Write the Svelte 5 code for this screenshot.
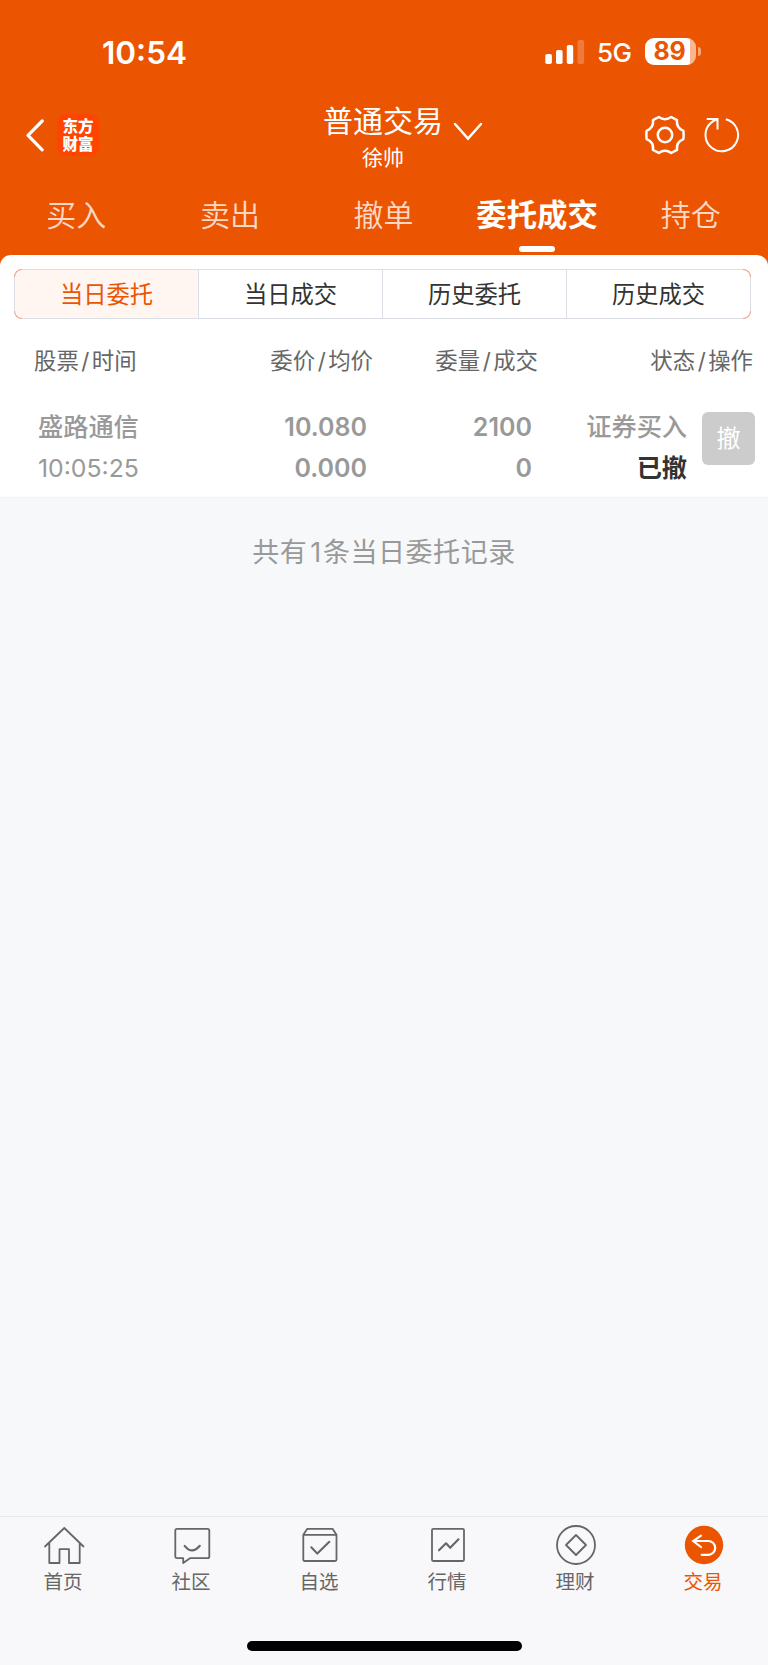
<script>
  const tabs = ['买入', '卖出', '撤单', '委托成交', '持仓'];
  const filters = ['当日委托', '当日成交', '历史委托', '历史成交'];
  const columns = [['股票', '时间'], ['委价', '均价'], ['委量', '成交'], ['状态', '操作']];
  const orders = [
    { name: '盛路通信', time: '10:05:25', price: '10.080', avg: '0.000', amount: 2100, filled: 0, type: '证券买入', status: '已撤' }
  ];
  const navItems = ['首页', '社区', '自选', '行情', '理财', '交易'];

  let activeTab = $state(3);
  let activeFilter = $state(0);
  let activeNav = $state(5);
</script>

<div class="app">
  <header>
    <div class="status-bar">
      <span class="clock">10:54</span>
      <svg class="signal" width="40" height="26" viewBox="0 0 40 26" fill="#fff">
        <rect x="0.3" y="15" width="6.6" height="10" rx="1.8" />
        <rect x="11" y="11" width="6.6" height="14" rx="1.8" />
        <rect x="21.8" y="6" width="6.4" height="19" rx="1.8" />
        <rect x="32.5" y="1" width="6.6" height="24" rx="1.8" opacity="0.22" />
      </svg>
      <span class="network">5G</span>
      <span class="battery"><b>89</b></span>
      <i class="nub"></i>
    </div>

    <div class="title-bar">
      <div class="side">
        <svg width="20" height="36" viewBox="0 0 20 36" fill="none" stroke="#fff" stroke-width="3.2" stroke-linecap="round" stroke-linejoin="round">
          <path d="M16.2 4 2 18.3 16.2 32.8" />
        </svg>
        <div class="logo"><span>东方</span><span>财富</span></div>
      </div>
      <div class="title">
        <h1>普通交易</h1>
        <p>徐帅</p>
        <svg class="caret" width="30" height="20" viewBox="0 0 30 20" fill="none" stroke="#fff" stroke-width="2.5" stroke-linecap="round">
          <path d="M2 2 15 16.6 28 2" />
        </svg>
      </div>
      <div class="side right">
        <svg width="42" height="42" viewBox="-21 -21 42 42" fill="none" stroke="#fff" stroke-width="2.5" stroke-linejoin="round">
          <path d="M-6.2-18Q0-13.6 6.2-18L12-14.8Q11-7.2 18.4-4.2Q18.9 0 18.4 4.2Q11 7.2 12 14.8L6.2 18Q0 13.6-6.2 18L-12 14.8Q-11 7.2-18.4 4.2Q-18.9 0-18.4-4.2Q-11-7.2-12-14.8Z" />
          <circle r="7.2" />
        </svg>
        <svg width="36" height="42" viewBox="-18 -21 36 42" fill="none" stroke="#fff" stroke-width="2">
          <path d="M3.8-15.8A16.3 16.3 0 1 1-11-12.2Q-8.5-14.4-4.8-16M-15.3-16H-4.5V-5.5" />
        </svg>
      </div>
    </div>

    <nav class="tabs">
      {#each tabs as tab, i}
        <button class:active={activeTab === i} onclick={() => (activeTab = i)}>{tab}</button>
      {/each}
    </nav>
  </header>

  <main>
    <div class="filters">
      {#each filters as filter, i}
        <button class:active={activeFilter === i} onclick={() => (activeFilter = i)}>{filter}</button>
      {/each}
    </div>

    <div class="row head">
      {#each columns as [first, second]}
        <span>{first}<i>/</i>{second}</span>
      {/each}
    </div>

    {#each orders as order}
      <div class="row order">
        <div class="cell"><b>{order.name}</b><span>{order.time}</span></div>
        <div class="cell num"><b>{order.price}</b><b>{order.avg}</b></div>
        <div class="cell num"><b>{order.amount}</b><b>{order.filled}</b></div>
        <div class="cell"><b>{order.type}</b><b class="status">{order.status}</b></div>
        <button class="cancel">撤</button>
      </div>
    {/each}
  </main>

  <p class="summary">共有<span>1</span>条当日委托记录</p>

  <footer>
    <nav class="bottom-nav">
      {#each navItems as item, i}
        <button class:active={activeNav === i} onclick={() => (activeNav = i)}>
          <svg width="42" height="42" viewBox="0 0 42 42" fill="none" stroke="currentColor" stroke-width="1.8" stroke-linejoin="round" stroke-linecap="round">
            {#if i === 0}
              <path d="M2 21.5 21.3 3 40.5 21.5M6.3 18V38H16.5V24.2H26V38H36.7V18" />
            {:else if i === 1}
              <path d="M6 3.8H36.5Q38.3 3.8 38.3 5.6V31.4Q38.3 33.2 36.5 33.2H19L12.2 38V33.2H6Q4.3 33.2 4.3 31.4V5.6Q4.3 3.8 6 3.8Z" />
              <path d="M13.7 20.8Q21 30 28.8 20.8" stroke-width="2.1" />
            {:else if i === 2}
              <path d="M4.3 9.8 8.3 3.8H33.5L37.5 9.8V34.5Q37.5 36 36 36H5.8Q4.3 36 4.3 34.5ZM4.3 9.8H37.5" />
              <path d="M12.3 22.3 18.3 28.6 30.3 16.8" stroke-width="2.1" />
            {:else if i === 3}
              <rect x="5" y="3.8" width="32" height="32.2" rx="1.2" />
              <path d="M12 25.3 19 18.3 23.2 22.8 31.5 14.3" stroke-width="2.1" />
            {:else if i === 4}
              <circle cx="21" cy="20" r="19" />
              <path d="M21 10 31 20 21 30 11 20Z" />
            {:else}
              <circle cx="21" cy="20" r="19.2" fill="currentColor" stroke="none" />
              <path d="M18 10.6 10.2 16 18 22M10.5 16H25.3A6.9 6.9 0 0 1 25.3 29.8H18.7" stroke="#fff" stroke-width="2.2" stroke-linejoin="miter" />
            {/if}
          </svg>
          <span>{item}</span>
        </button>
      {/each}
    </nav>
    <div class="home-indicator"></div>
  </footer>
</div>

<style>
  :global(body) {
    margin: 0;
  }

  .app {
    display: flex;
    flex-direction: column;
    width: 768px;
    height: 1665px;
    overflow: hidden;
    background: #f7f8fa;
    color: #999;
    font-family: Inter, "Noto Sans CJK SC", sans-serif;
  }

  button {
    border: none;
    background: none;
    padding: 0;
    font-family: inherit;
    color: inherit;
  }

  header {
    height: 269px;
    box-sizing: border-box;
    background: #eb5502;
    color: #fff;
  }

  .status-bar {
    display: flex;
    align-items: center;
    height: 103px;
    padding-left: 102px;
  }

  .clock {
    width: 443px;
    padding-top: 2px;
    font-size: 31.5px;
    line-height: 36px;
    font-weight: 600;
  }

  .network {
    width: 48px;
    margin-left: 12px;
    font-size: 26px;
    font-weight: 500;
    letter-spacing: -0.6px;
    line-height: 30px;
    padding-top: 3px;
  }

  .battery {
    width: 51px;
    height: 27px;
    border-radius: 9px;
    background: linear-gradient(90deg, #fff 45px, #f7b792 45px);
    color: #eb5502;
    font-size: 25px;
    line-height: 27px;
    text-align: center;
  }

  .battery b {
    font-weight: 700;
    letter-spacing: -0.3px;
    margin-right: 2px;
  }

  .nub {
    width: 3px;
    height: 9px;
    margin-left: 2px;
    border-radius: 0 4px 4px 0;
    background: #f5a67a;
  }

  .title-bar {
    display: grid;
    grid-template-columns: 1fr auto 1fr;
    height: 75px;
  }

  .side {
    display: flex;
    align-items: center;
    height: 64px;
    padding-left: 26px;
  }

  .right {
    justify-content: flex-end;
    gap: 18px;
    padding: 0 28px 0 0;
  }

  .logo {
    display: flex;
    flex-direction: column;
    width: 42px;
    height: 42px;
    margin-left: 11px;
    box-sizing: border-box;
    padding-top: 3px;
    border-radius: 9px;
    background: #ff4300;
    font-family: "Noto Sans CJK SC", sans-serif;
    font-size: 15.5px;
    line-height: 17.5px;
    font-weight: 900;
    text-align: center;
  }

  .title {
    position: relative;
    text-align: center;
  }

  h1 {
    margin: 0 1px 0 -1px;
    font-size: 30px;
    line-height: 36px;
    font-weight: 400;
  }

  .title p {
    margin: 0 1px 0 -1px;
    font-size: 21px;
    line-height: 38px;
  }

  .caret {
    position: absolute;
    left: 129px;
    top: 19px;
  }

  .tabs {
    display: grid;
    grid-template-columns: repeat(5, 1fr);
    height: 76px;
  }

  .tabs button {
    display: flex;
    flex-direction: column;
    align-items: center;
    padding: 15px 1px 0 0;
    color: #fcd9c7;
    font-size: 30px;
    line-height: 44px;
    font-weight: 350;
  }

  .tabs .active {
    color: #fff;
    font-size: 30.4px;
    font-weight: 700;
  }

  .tabs .active::after {
    content: "";
    width: 36px;
    height: 6px;
    margin-top: 9px;
    border-radius: 3px;
    background: #fff;
  }

  main {
    margin-top: -14px;
    height: 243px;
    border-radius: 11px 11px 0 0;
    background: #fff;
  }

  .filters {
    display: grid;
    grid-template-columns: 183px 184px 184px 1fr;
    width: 737px;
    height: 50px;
    box-sizing: border-box;
    margin: 0 0 0 14px;
    position: relative;
    top: 14px;
    border: 1px solid #dcdfe5;
    border-radius: 8px;
    color: #333;
  }

  /* orange tint on the rounded outer corners */
  .filters::before,
  .filters::after {
    content: "";
    position: absolute;
    top: -1px;
    bottom: -1px;
    width: 8px;
    box-sizing: border-box;
    border: 1px solid #f3a680;
  }

  .filters::before {
    left: -1px;
    border-right: none;
    border-radius: 8px 0 0 8px;
    clip-path: polygon(0 0, 100% 0, 100% 8px, 0 8px, 0 42px, 100% 42px, 100% 100%, 0 100%);
  }

  .filters::after {
    right: -1px;
    border-left: none;
    border-radius: 0 8px 8px 0;
    clip-path: polygon(0 0, 100% 0, 100% 8px, 0 8px, 0 42px, 100% 42px, 100% 100%, 0 100%);
  }

  .filters button {
    padding-top: 2px;
    font-size: 23.3px;
    line-height: 46px;
  }

  .filters button + button {
    border-left: 1px solid #dcdfe5;
  }

  .filters .active {
    border-radius: 7px 0 0 7px;
    background: #fff5f1;
    color: #eb5502;
  }

  .row {
    display: grid;
    box-sizing: border-box;
  }

  .head {
    grid-template-columns: 154px 1fr 165px 215px;
    margin-top: 34px;
    height: 44px;
    padding: 0 15px 0 34px;
    color: #666;
    font-size: 22.4px;
    line-height: 44px;
    text-align: right;
  }

  .head span:first-child {
    text-align: left;
  }

  .head i {
    font-style: normal;
    margin: 0 2.5px;
  }

  .order {
    grid-template-columns: 144px 185px 165px 155px 1fr;
    margin-top: 24px;
    padding: 0 13px 0 38px;
    height: 91px;
    border-bottom: 1px solid #f2f2f4;
    font-size: 25.2px;
    line-height: 41px;
  }

  .cell {
    display: flex;
    flex-direction: column;
    text-align: right;
  }

  .cell:first-child {
    text-align: left;
  }

  .cell span {
    font-size: 24.8px;
  }

  .cell b {
    font-weight: 500;
  }

  .num b {
    font-size: 25px;
    font-weight: 600;
  }

  .cell .status {
    color: #333;
    font-weight: 600;
  }

  .cancel {
    justify-self: end;
    width: 53px;
    height: 53px;
    margin-top: 5px;
    border-radius: 6px;
    background: #ccc;
    color: #fff;
    font-size: 24px;
    line-height: 53px;
  }

  .summary {
    margin: 35px 0 0;
    font-size: 27px;
    letter-spacing: 0.55px;
    line-height: 40px;
    text-align: center;
  }

  .summary span {
    margin: 0 1px 0 3px;
  }

  footer {
    margin-top: auto;
    height: 149px;
    box-sizing: border-box;
    border-top: 1px solid #e9eaec;
    background: #f8f8fb;
  }

  .bottom-nav {
    display: grid;
    grid-template-columns: repeat(6, 1fr);
    height: 124px;
  }

  .bottom-nav button {
    display: flex;
    flex-direction: column;
    align-items: center;
    padding-top: 8px;
    color: #666;
    font-size: 19.5px;
    line-height: 30px;
  }

  .bottom-nav span {
    margin-right: 2px;
  }

  .bottom-nav .active {
    color: #eb5502;
  }

  .home-indicator {
    width: 275px;
    height: 10px;
    margin: 0 auto;
    border-radius: 5px;
    background: #000;
  }
</style>
